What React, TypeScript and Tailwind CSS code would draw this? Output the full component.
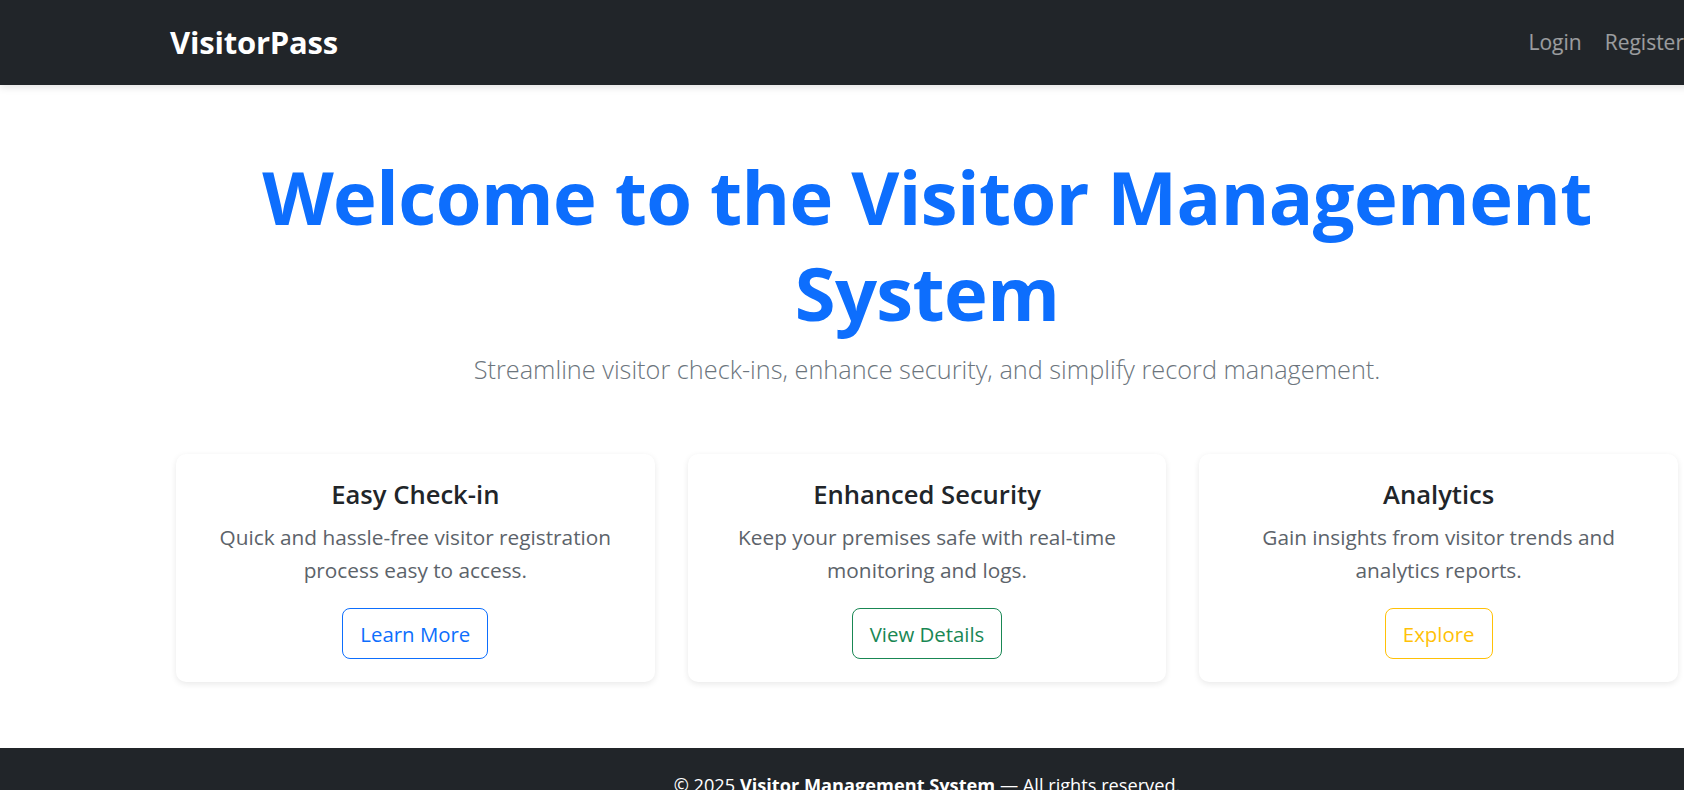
const cards = [
  {
    title: "Easy Check-in",
    text: ["Quick and hassle-free visitor registration", "process easy to access."],
    action: "Learn More",
    tone: "border-[#0d6efd] text-[#0d6efd]",
  },
  {
    title: "Enhanced Security",
    text: ["Keep your premises safe with real-time", "monitoring and logs."],
    action: "View Details",
    tone: "border-[#198754] text-[#198754]",
  },
  {
    title: "Analytics",
    text: ["Gain insights from visitor trends and", "analytics reports."],
    action: "Explore",
    tone: "border-[#ffc107] text-[#ffc107]",
  },
];

export default function App() {
  return (
    <div className="min-h-screen overflow-hidden bg-white font-['Open_Sans',sans-serif]">
      <div className="w-[1854px]">
        <nav className="relative z-10 flex h-[85px] items-center justify-between bg-[#212529] px-[170px] shadow-[0_2px_8px_rgba(0,0,0,0.12)]">
          <a className="text-[31px] font-bold tracking-[-0.2px] text-white">VisitorPass</a>
          <div className="flex items-center gap-[23px] text-[21px] text-white/55">
            <a>Login</a>
            <a>Register</a>
          </div>
        </nav>

        <main className="flex flex-col items-center pb-[66px]">
          <h1 className="mt-[64px] text-center text-[74px] font-bold leading-[96px] tracking-[-0.6px] text-[#0d6efd]">
            Welcome to the Visitor Management
            <br />
            System
          </h1>
          <p className="mt-[10px] text-[25.3px] font-light leading-[36px] text-[#6c757d]">
            Streamline visitor check-ins, enhance security, and simplify record management.
          </p>

          <div className="mt-[67px] grid w-[1502px] grid-cols-3 gap-[33px]">
            {cards.map((card) => (
              <article
                key={card.title}
                className="flex flex-col items-center rounded-[10px] bg-white px-6 pt-[26px] pb-[23px] text-center shadow-[0_2px_6px_rgba(0,0,0,0.09)]"
              >
                <h3 className="text-[25.6px] font-semibold leading-[30px] text-[#212529]">{card.title}</h3>
                <p className="mt-[11px] text-[20.8px] leading-[33px] text-[#5c636a]">
                  {card.text[0]}
                  <br />
                  {card.text[1]}
                </p>
                <button
                  className={`mt-[21px] flex h-[51px] items-center rounded-[8px] border px-[17px] text-[20.4px] leading-[30px] ${card.tone}`}
                >
                  {card.action}
                </button>
              </article>
            ))}
          </div>
        </main>

        <footer className="bg-[#212529] pt-[24px] pb-6 text-center text-[18.2px] leading-[26px] text-white">
          © 2025 <span className="font-bold">Visitor Management System</span> — All rights reserved.
        </footer>
      </div>
    </div>
  );
}
